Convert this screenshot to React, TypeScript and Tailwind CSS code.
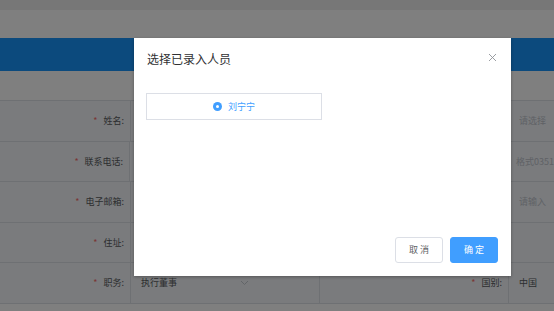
import { useState } from 'react';

const font = { fontFamily: '"Noto Sans CJK SC", "Noto Sans", sans-serif' };

type Row = { label: string; value: string; select?: boolean; rLabel: string; rValue: string; rMuted?: boolean };

const rows: Row[] = [
  { label: '姓名', value: '', rLabel: '证件类型', rValue: '请选择', rMuted: true },
  { label: '联系电话', value: '', rLabel: '固定电话', rValue: '格式0351', rMuted: true },
  { label: '电子邮箱', value: '', rLabel: '邮编', rValue: '请输入', rMuted: true },
  { label: '住址', value: '', rLabel: '', rValue: '' },
  { label: '职务', value: '执行董事', select: true, rLabel: '国别', rValue: '中国' },
];

export default function App() {
  const [picked] = useState('刘宁宁');

  return (
    <div className="relative w-[554px] h-[311px] overflow-hidden bg-white" style={font}>
      {/* page underneath */}
      <div className="h-[10px] bg-[#eeeeee]" />
      <div className="h-[28px] bg-white" />
      <div className="h-[33px] bg-[#1894fa]" />
      <div className="h-[29px] bg-white" />
      <div className="border-t border-[#dde1e6]">
        {rows.map((r, i) => (
          <div key={i} className="flex h-[40.6px] border-b border-[#dde1e6] bg-[#f4f7fb] text-[9px]">
            <div className="w-[131px] flex items-center justify-end pr-[6px] border-r border-[#dde1e6] text-[#5a5c60]">
              <span className="text-[#f56c6c] mr-[6px]">*</span>
              {r.label}:
            </div>
            <div className="w-[189px] flex items-center justify-between pl-[10px] pr-[70px] border-r border-[#dde1e6] text-[#5a5c60]">
              <span>{r.value}</span>
              {r.select && (
                <svg width="9" height="6" viewBox="0 0 9 6" fill="none" stroke="#c0c4cc" strokeWidth="0.9">
                  <path d="M1 1l3.5 3.5L8 1" />
                </svg>
              )}
            </div>
            <div className="w-[189px] flex items-center justify-end pr-[6px] border-r border-[#dde1e6] text-[#5a5c60]">
              {r.rLabel && (
                <>
                  <span className="text-[#f56c6c] mr-[6px]">*</span>
                  {r.rLabel}:
                </>
              )}
            </div>
            <div className={`flex-1 flex items-center pl-[10px] whitespace-nowrap ${r.rMuted ? 'text-[#c0c4cc]' : 'text-[#5a5c60]'}`}>
              {r.rValue}
            </div>
          </div>
        ))}
      </div>

      {/* overlay */}
      <div className="absolute inset-0 bg-black/50" />

      {/* dialog */}
      <div className="absolute left-[134px] top-[38px] w-[377px] h-[238px] bg-white shadow-[0_1px_3px_rgba(0,0,0,0.3)] flex flex-col">
        <div className="flex items-start justify-between pl-[13px] pr-[13px] pt-[12px]">
          <h2 className="text-[12px] leading-[18px] text-[#303133]">选择已录入人员</h2>
          <svg width="9" height="9" viewBox="0 0 9 9" stroke="#909399" strokeWidth="0.9" className="mt-[3px] mr-[1px]">
            <path d="M1 1l7 7M8 1L1 8" />
          </svg>
        </div>
        <div className="pl-[12px] pt-[25px]">
          <div className="w-[176px] h-[27px] border border-[#dcdfe6] flex items-center justify-center gap-[6px]">
            <span className="w-[9px] h-[9px] rounded-full bg-[#409eff] flex items-center justify-center">
              <span className="w-[3px] h-[3px] rounded-full bg-white" />
            </span>
            <span className="text-[9px] leading-none text-[#409eff]">{picked}</span>
          </div>
        </div>
        <div className="mt-auto flex justify-end gap-[7px] pr-[13px] pb-[13px]">
          <button className="w-[48px] h-[26px] rounded-[3px] border border-[#dcdfe6] bg-white text-[9px] text-[#606266]">
            取 消
          </button>
          <button className="w-[48px] h-[26px] rounded-[3px] border border-[#409eff] bg-[#409eff] text-[9px] text-white">
            确 定
          </button>
        </div>
      </div>
    </div>
  );
}
